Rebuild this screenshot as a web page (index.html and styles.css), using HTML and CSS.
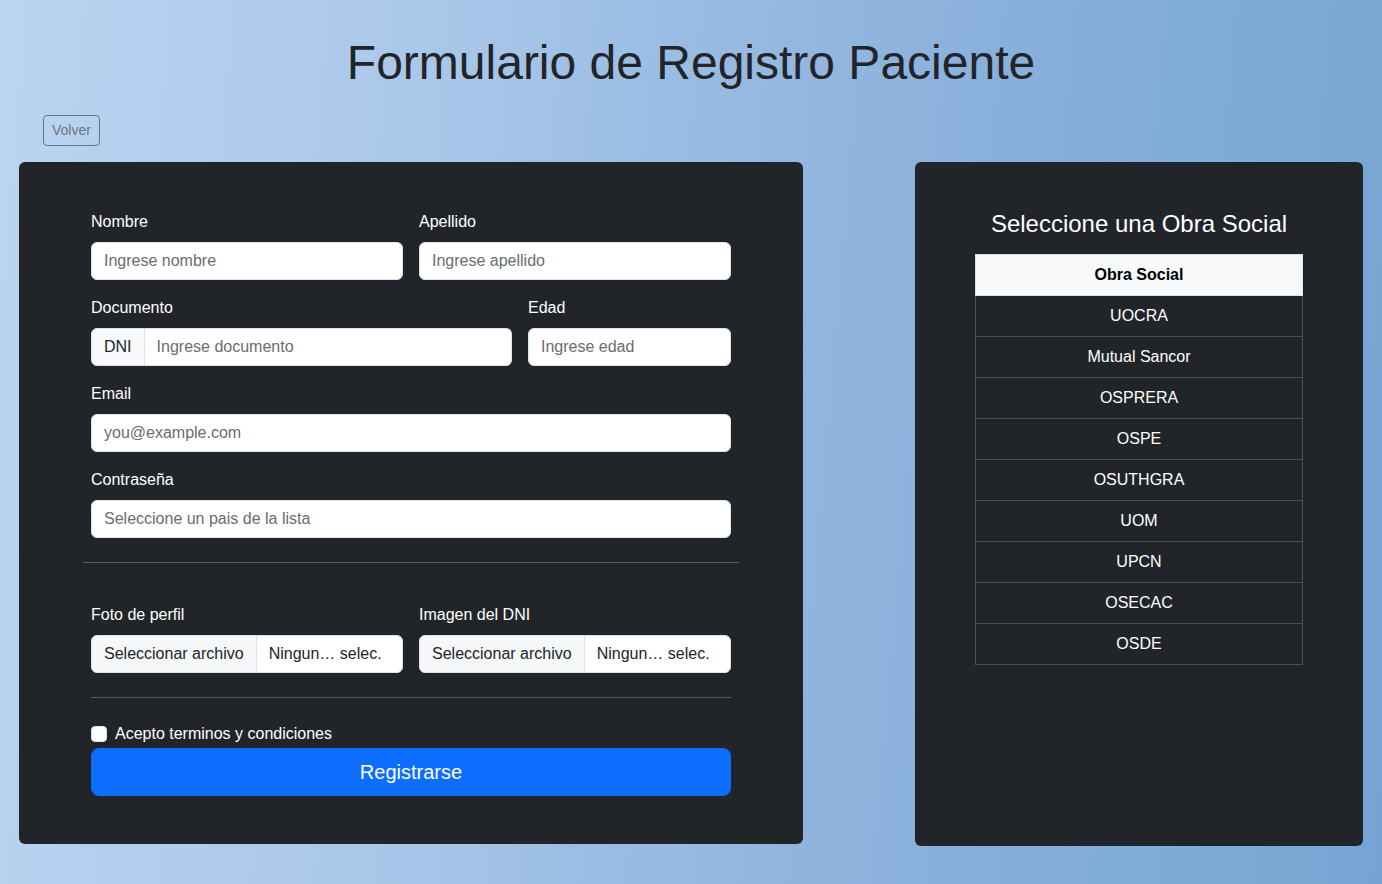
FILE: index.html
```html
<!DOCTYPE html>
<html lang="es">
<head>
<meta charset="utf-8">
<title>Formulario de Registro Paciente</title>
<link rel="stylesheet" href="styles.css">
</head>
<body>
<h1 class="title">Formulario de Registro Paciente</h1>
<div class="back-wrap"><button class="btn-back">Volver</button></div>
<main class="layout">
  <section class="card card-form">
    <form class="form">
      <div class="row">
        <div class="field half">
          <label class="label">Nombre</label>
          <div class="input placeholder">Ingrese nombre</div>
        </div>
        <div class="field half">
          <label class="label">Apellido</label>
          <div class="input placeholder">Ingrese apellido</div>
        </div>
      </div>
      <div class="row">
        <div class="field wide">
          <label class="label">Documento</label>
          <div class="group">
            <span class="addon">DNI</span>
            <div class="input group-input placeholder">Ingrese documento</div>
          </div>
        </div>
        <div class="field narrow">
          <label class="label">Edad</label>
          <div class="input placeholder">Ingrese edad</div>
        </div>
      </div>
      <div class="row">
        <div class="field full">
          <label class="label">Email</label>
          <div class="input placeholder">you@example.com</div>
        </div>
      </div>
      <div class="row">
        <div class="field full">
          <label class="label">Contraseña</label>
          <div class="input placeholder">Seleccione un pais de la lista</div>
        </div>
      </div>
      <hr class="sep sep-wide">
      <div class="row row-files">
        <div class="field half">
          <label class="label">Foto de perfil</label>
          <div class="file">
            <span class="file-btn">Seleccionar archivo</span>
            <span class="file-name">Ningun… selec.</span>
          </div>
        </div>
        <div class="field half">
          <label class="label">Imagen del DNI</label>
          <div class="file">
            <span class="file-btn">Seleccionar archivo</span>
            <span class="file-name">Ningun… selec.</span>
          </div>
        </div>
      </div>
      <hr class="sep">
      <div class="check">
        <span class="check-box"></span>
        <span class="check-label">Acepto terminos y condiciones</span>
      </div>
      <button type="button" class="btn-submit">Registrarse</button>
    </form>
  </section>
  <section class="card card-table">
    <h4 class="table-title">Seleccione una Obra Social</h4>
    <table class="os-table">
      <thead><tr><th>Obra Social</th></tr></thead>
      <tbody>
        <tr><td>UOCRA</td></tr>
        <tr><td>Mutual Sancor</td></tr>
        <tr><td>OSPRERA</td></tr>
        <tr><td>OSPE</td></tr>
        <tr><td>OSUTHGRA</td></tr>
        <tr><td>UOM</td></tr>
        <tr><td>UPCN</td></tr>
        <tr><td>OSECAC</td></tr>
        <tr><td>OSDE</td></tr>
      </tbody>
    </table>
  </section>
</main>
</body>
</html>
```
FILE: styles.css
```css
* { box-sizing: border-box; }
html, body { height: 100%; }
body {
  margin: 0;
  font-family: "Liberation Sans", Arial, sans-serif;
  font-size: 16px;
  line-height: 1.5;
  color: #212529;
  background: linear-gradient(95deg, #bbd5f1 0%, #a9c7e9 30%, #8fb4de 60%, #76a4d2 100%);
  min-height: 884px;
}
.title {
  margin: 0;
  padding-top: 34px;
  font-size: 48px;
  font-weight: 400;
  line-height: 1.2;
  text-align: center;
  color: #212529;
}
.back-wrap {
  padding: 23px 0 0 43px;
}
.btn-back {
  font-family: inherit;
  font-size: 14px;
  line-height: 21px;
  padding: 4px 8px;
  color: #6c757d;
  background: transparent;
  border: 1px solid #6c757d;
  border-radius: 4px;
}
.layout {
  display: flex;
  justify-content: space-between;
  align-items: flex-start;
  padding: 0 19px;
  margin-top: 16px;
}
.card {
  background: #212529;
  border-radius: 6px;
  color: #fff;
}
.card-form {
  width: 784px;
  padding: 48px 72px;
}
.card-table {
  width: 448px;
  height: 684px;
  padding: 48px 60px;
}
.form { display: flex; flex-direction: column; }
.row {
  display: flex;
  gap: 16px;
  margin-bottom: 16px;
}
.row:nth-child(4) { margin-bottom: 0; }
.field { display: flex; flex-direction: column; }
.half { width: 312px; }
.wide { width: 421px; }
.narrow { width: 203px; }
.full { width: 640px; }
.label {
  display: block;
  margin-bottom: 8px;
  line-height: 24px;
  color: #fff;
}
.input {
  height: 38px;
  padding: 6px 12px;
  line-height: 24px;
  background: #fff;
  border: 1px solid #dee2e6;
  border-radius: 6px;
  color: #212529;
}
.placeholder { color: #686d72; }
.group { display: flex; }
.addon {
  height: 38px;
  padding: 6px 12px;
  line-height: 24px;
  background: #f8f9fa;
  border: 1px solid #dee2e6;
  border-radius: 6px 0 0 6px;
  color: #212529;
}
.group-input {
  flex: 1;
  border-left: 0;
  border-radius: 0 6px 6px 0;
}
.sep {
  border: 0;
  border-top: 1px solid rgba(255, 255, 255, 0.25);
  margin: 24px 0;
  height: 0;
}
.sep-wide { margin: 24px -8px 40px; }
.row-files { margin-bottom: 0; }
.file {
  display: flex;
  height: 38px;
  background: #fff;
  border: 1px solid #dee2e6;
  border-radius: 6px;
  overflow: hidden;
  color: #212529;
  line-height: 24px;
}
.file-btn {
  padding: 6px 12px;
  background: #f6f7f9;
  border-right: 1px solid #dee2e6;
}
.file-name { padding: 6px 12px; }
.check {
  display: flex;
  align-items: center;
  gap: 8px;
  height: 24px;
  margin-bottom: 2px;
}
.check-box {
  width: 16px;
  height: 16px;
  background: #fff;
  border: 1px solid #dee2e6;
  border-radius: 4px;
}
.check-label { line-height: 24px; color: #fff; }
.btn-submit {
  height: 48px;
  font-family: inherit;
  font-size: 20px;
  line-height: 30px;
  color: #fff;
  background: #0d6efd;
  border: 1px solid #0d6efd;
  border-radius: 8px;
}
.table-title {
  margin: 0 0 16px;
  font-size: 24px;
  font-weight: 400;
  line-height: 1.2;
  text-align: center;
  color: #fff;
}
.os-table {
  width: 100%;
  border-collapse: collapse;
  text-align: center;
}
.os-table th, .os-table td {
  padding: 8px;
  line-height: 24px;
  border: 1px solid #4d5154;
}
.os-table th {
  background: #f8f9fa;
  color: #000;
  font-weight: 700;
  border-color: #dee2e6;
}
.os-table td { color: #fff; }
```
